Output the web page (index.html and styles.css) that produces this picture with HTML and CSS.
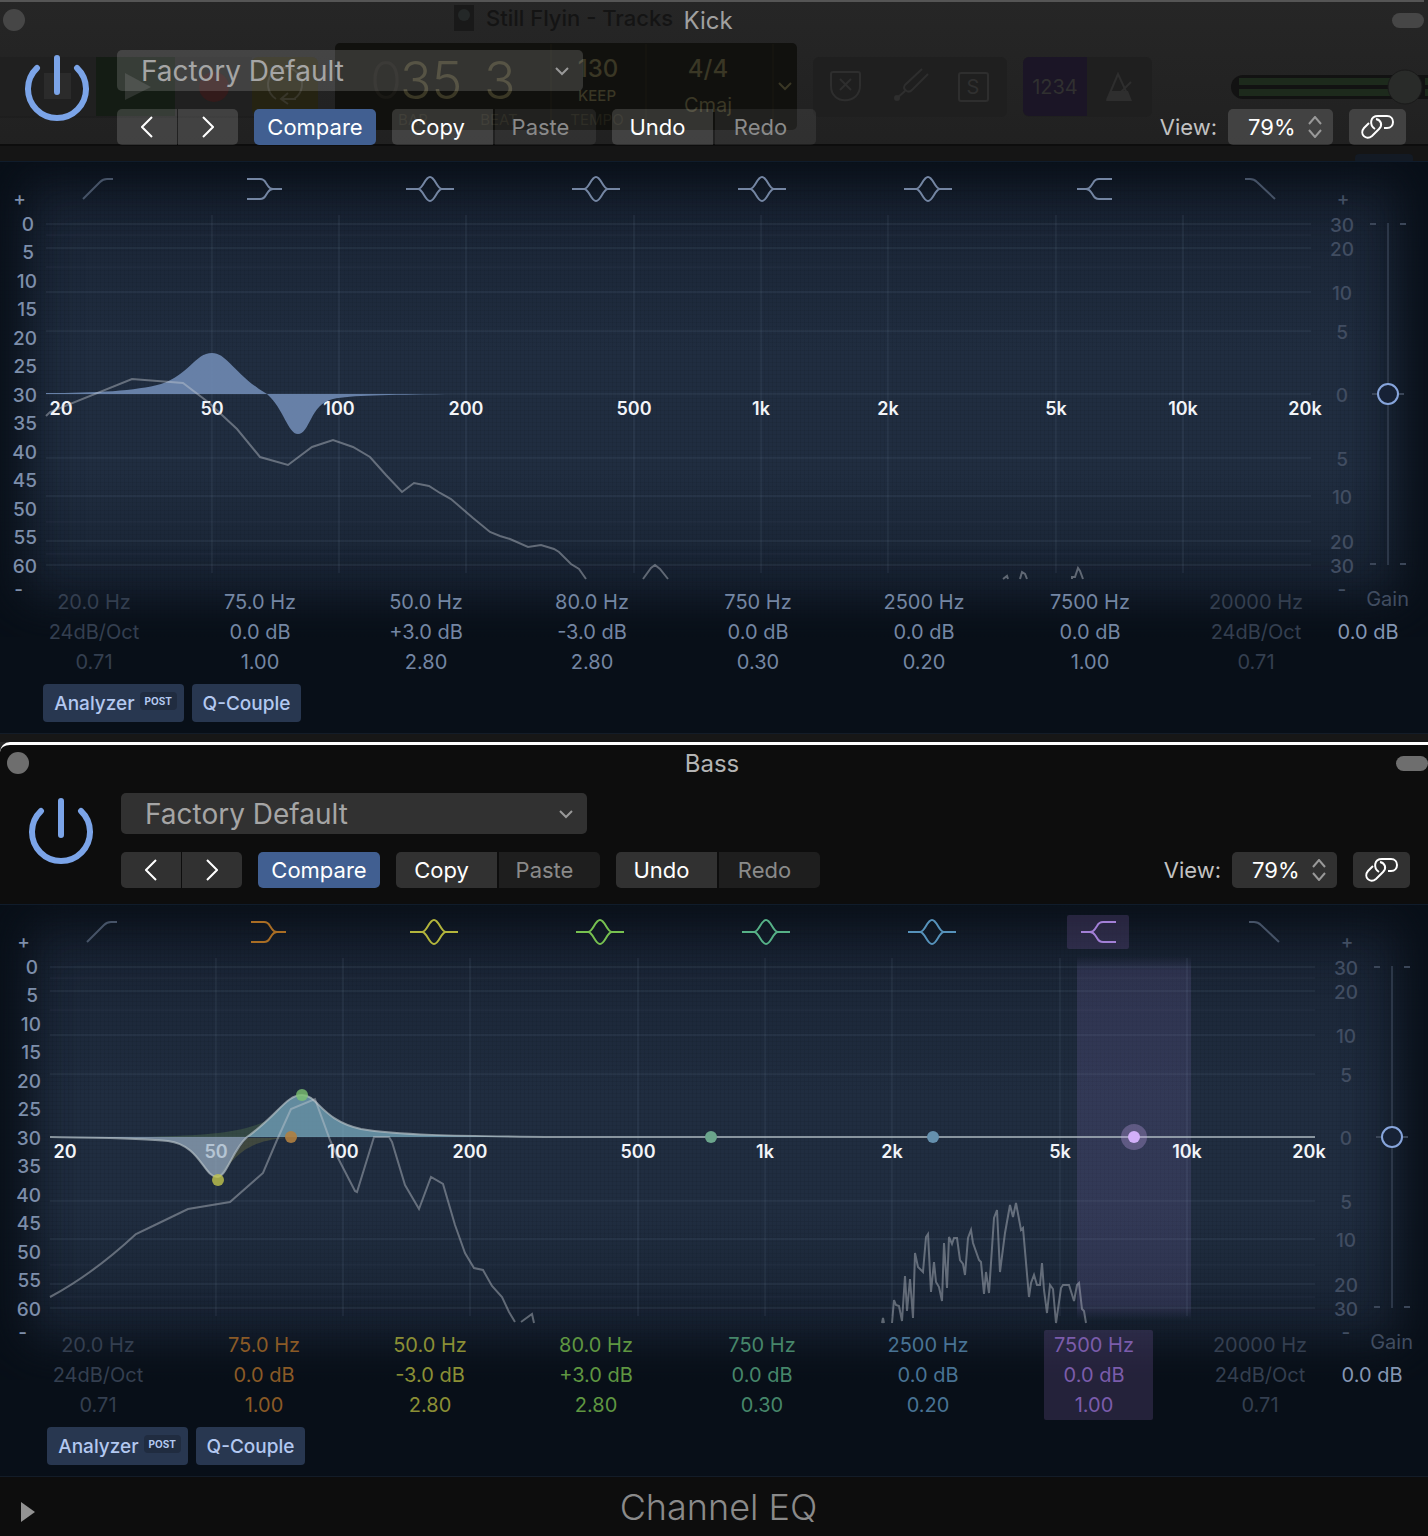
FILE: index.html
```html
<!DOCTYPE html>
<html lang="en">
<head>
    <meta charset="UTF-8">
    <meta name="viewport" content="width=device-width, initial-scale=1.0">
    <title>Channel EQ</title>
    <link rel="stylesheet" href="styles.css">
</head>
<body>
    <!-- Main window toolbar, dimmed behind the first plugin window -->
    <svg class="backdrop" width="1428" height="162" aria-hidden="true">
        <rect x="-6" y="57" width="102" height="59" fill="#202020"/>
        <rect x="44" y="73" width="27" height="26" fill="#2b2b2b"/>
        <rect x="96" y="57" width="79" height="59" fill="#141c14"/>
        <path d="M125 73l26 14-26 13z" fill="#2f342f"/>
        <rect x="175" y="57" width="77" height="59" fill="#202020"/>
        <circle cx="214" cy="87" r="15" fill="#331b1b"/>
        <rect x="252" y="57" width="66" height="59" rx="6" fill="#252312"/>
        <path d="M276 99a17 17 0 1 1 18 0M296 99h-14M288 93l-7 6 7 5" fill="none" stroke="#38362a" stroke-width="2"/>
        <path d="M0 117H334" stroke="#1b1b1b"/>
        <rect x="454" y="5" width="20" height="26" fill="#191919"/>
        <circle cx="464" cy="15" r="6" fill="#242828"/>
        <text x="486" y="26" class="bd-title">Still Flyin - Tracks</text>
        <rect x="335" y="43" width="462" height="87" rx="5" fill="#11110e"/>
        <path d="M551 44v85M646 44v85M773 44v85" stroke="#1a1911"/>
        <text x="370" y="99" class="bd-big bd-off">0</text>
        <text x="400" y="99" class="bd-big">35</text>
        <text x="484" y="99" class="bd-big">3</text>
        <text x="598" y="77" class="bd-mid">130</text>
        <text x="597" y="101" class="bd-small">KEEP</text>
        <text x="708" y="77" class="bd-mid">4/4</text>
        <text x="708" y="112" class="bd-key">Cmaj</text>
        <text x="413" y="125" class="bd-caption">BAR</text>
        <text x="499" y="125" class="bd-caption">BEAT</text>
        <text x="597" y="125" class="bd-caption">TEMPO</text>
        <path d="M779 83l6 6 6-6" fill="none" stroke="#3a3725" stroke-width="2"/>
        <rect x="813" y="57" width="194" height="60" rx="6" fill="#1f1f1f"/>
        <rect x="1023" y="57" width="129" height="60" rx="6" fill="#1f1f1f"/>
        <path d="M1029 57h58v59h-58a6 6 0 0 1-6-6V63a6 6 0 0 1 6-6z" fill="#1b1526"/>
        <g fill="none" stroke="#2e2e2e" stroke-width="2">
            <path d="M833 72h25q2 0 2 2v12c0 18-29 20-29 0V74q0-2 2-2zM840 79l11 11M851 79l-11 11"/>
            <path d="M922 69l-17 16c-3 4 3 9 7 5l16-16M905 91l-9 8"/>
            <rect x="959" y="73" width="29" height="28" rx="2"/>
            <path d="M1107 100l11-26 12 26M1131 82l-12 12"/>
        </g>
        <circle cx="897" cy="98" r="3" fill="#2e2e2e"/>
        <path d="M1106 101l4-10h18l4 10z" fill="#2e2e2e"/>
        <text x="973" y="94" class="bd-solo">S</text>
        <text x="1055" y="94" class="bd-count">1234</text>
        <rect x="1231" y="75" width="220" height="24" rx="12" fill="#121212"/>
        <path d="M1239 78h169v7h-169zM1239 89h169v7h-169zM1425 78h3v7h-3zM1425 89h3v7h-3z" fill="#1d2a1c"/>
        <circle cx="1405" cy="87" r="17" fill="#292b29" stroke="#1a1a1a"/>
        <rect y="144" width="1428" height="2" fill="#0d0d0d"/>
        <rect y="146" width="1428" height="16" fill="#151515"/>
        <rect x="1355" y="154" width="58" height="10" rx="4" fill="#131a24"/>
    </svg>

    <!-- Shared icons -->
    <svg class="icon-defs" aria-hidden="true">
        <symbol id="highpass" viewBox="0 0 48 28"><path d="M9 24L26 7q3-3 7-3h6"/></symbol>
        <symbol id="lowshelf" viewBox="0 0 48 28"><path d="M7 4h13q4 0 6 4l2 3q2 3 5 3h9M7 24h13q4 0 6-4l2-3q2-3 5-3"/></symbol>
        <symbol id="peak" viewBox="0 0 48 28"><path d="M0 14h12M36 14h12M12 14c5 0 7-12 12-12s7 12 12 12c-5 0-7 12-12 12s-7-12-12-12"/></symbol>
        <symbol id="highshelf" viewBox="0 0 48 28"><path d="M42 4H29q-4 0-6 4l-2 3q-2 3-5 3H7M42 24H29q-4 0-6-4l-2-3q-2-3-5-3"/></symbol>
        <symbol id="lowpass" viewBox="0 0 48 28"><path d="M9 4h5q4 0 7 3l18 17"/></symbol>
        <symbol id="power" viewBox="0 0 64 68"><path d="M12 13a29 29 0 1 0 40 0M32 3v34"/></symbol>
        <symbol id="link" viewBox="0 0 34 26"><path d="M14 15C8 11 9 2 17 2h9c8 0 8 12 0 12h-3M8 9l-5 5c-5 6 2 13 8 8l7-7c4-4 2-9-3-10"/></symbol>
    </svg>

    <main id="plugins"></main>

    <script>
        const icons = ['highpass', 'lowshelf', 'peak', 'peak', 'peak', 'peak', 'highshelf', 'lowpass'];

        const plugins = [
            {
                id: 'kick',
                name: 'Kick',
                bands: [
                    ['20.0 Hz', '24dB/Oct', '0.71', 'off'],
                    ['75.0 Hz', '0.0 dB', '1.00', 'low'],
                    ['50.0 Hz', '+3.0 dB', '2.80', 'bell1'],
                    ['80.0 Hz', '-3.0 dB', '2.80', 'bell2'],
                    ['750 Hz', '0.0 dB', '0.30', 'bell3'],
                    ['2500 Hz', '0.0 dB', '0.20', 'bell4'],
                    ['7500 Hz', '0.0 dB', '1.00', 'high'],
                    ['20000 Hz', '24dB/Oct', '0.71', 'off']
                ],
                curves: `
                    <path class="eq-fill" d="M0 186C50 186 90 184 115 177C143 168 149 146 166 146C180 146 187 164 213 182L221 187C238 202 242 227 252 227C264 227 264 197 287 192C305 188 340 188 400 187H0z"/>
                    <path class="spectrum" d="M0 209L4 205 86 172 137 176 162 195 191 222 214 250 242 258 266 240 287 233 307 240 324 250 340 268 356 285 368 276 383 279 394 286 405 292 427 311 444 325 454 329 464 332 482 340 495 338 508 342 513 345 525 357 533 362 540 372M597 372L605 361 609 358 614 362 622 372M957 372L961 369 962 372M974 372L976 365 979 367 981 372M1026 372V370H1029L1032 361 1034 364 1037 372"/>`
            },
            {
                id: 'bass',
                name: 'Bass',
                selected: 6,
                footer: 'Channel EQ',
                bands: [
                    ['20.0 Hz', '24dB/Oct', '0.71', 'off'],
                    ['75.0 Hz', '0.0 dB', '1.00', 'low'],
                    ['50.0 Hz', '-3.0 dB', '2.80', 'bell1'],
                    ['80.0 Hz', '+3.0 dB', '2.80', 'bell2'],
                    ['750 Hz', '0.0 dB', '0.30', 'bell3'],
                    ['2500 Hz', '0.0 dB', '0.20', 'bell4'],
                    ['7500 Hz', '0.0 dB', '1.00', 'high'],
                    ['20000 Hz', '24dB/Oct', '0.71', 'off']
                ],
                curves: `
                    <path fill="#6f9a55" opacity="0.25" d="M100 187C160 185 195 183 222 168L236 155 200 187z"/>
                    <path fill="#a09a40" opacity="0.25" d="M167 228C185 210 190 192 235 188H197z"/>
                    <path fill="#9bb0c4" opacity="0.7" d="M0 187C60 188 95 188 118 191C150 195 154 227 167 227C177 227 181 202 197 187z"/>
                    <path fill="#7fb3c8" opacity="0.7" d="M197 187C228 165 236 145 252 145C268 145 271 170 311 179C345 185 400 186 510 187z"/>
                    <path class="eq-line" d="M0 187C60 188 95 188 118 191C150 195 154 227 167 227C177 227 181 202 197 187C228 165 236 145 252 145C268 145 271 170 311 179C345 185 400 186 510 187H1265"/>
                    <path class="spectrum" d="M0 347Q43 324 86 284L107 274 138 259 180 252 213 223 227 190 241 159 265 149 280 190 288 208 305 241 307 242 324 187 339 187 342 192 355 235 369 259 381 227 393 234 405 275 415 303 424 318 433 320 442 336 452 347 459 362 465 372M471 372L482 364 484 373M832 373L833 368 834 373M842 373L844 350 846 355 849 356 852 371 855 326 857 361 860 329 863 368 865 303 868 317 873 322 876 287 878 284 881 342 884 312 886 332 889 337 892 351 894 293 897 338 899 287 902 294 904 288 907 288 910 310 913 314 915 325 918 288 921 280 923 293 929 310 931 312 934 344 936 322 939 343 944 268 947 260 950 322 955 283 960 255 963 267 966 253 971 280 973 278 979 347 981 333 984 325 987 335 990 335 992 313 994 340 997 363 1000 335 1003 339 1006 373 1011 338 1013 335 1019 335 1024 351 1027 335 1029 333 1032 359 1034 361 1036 373"/>
                    <circle cx="241" cy="187" r="6" fill="#b08040" opacity="0.9"/>
                    <circle cx="168" cy="230" r="6" fill="#c0c44c" opacity="0.8"/>
                    <circle cx="252" cy="145" r="6" fill="#7cc070" opacity="0.8"/>
                    <circle cx="661" cy="187" r="6" fill="#6ba58c"/>
                    <circle cx="883" cy="187" r="6" fill="#6590ae"/>
                    <circle cx="1084" cy="187" r="13" fill="#c9a8f0" opacity="0.3"/>
                    <circle cx="1084" cy="187" r="6" fill="#d2b0fa"/>`
            }
        ];

        // Frequency axis is logarithmic, 422px per decade
        const freqX = (f) => Math.round((Math.log10(f) - 2) * 422 + 293);
        const freqs = [[50, '50'], [100, '100'], [200, '200'], [500, '500'], [1000, '1k'], [2000, '2k'], [5000, '5k'], [10000, '10k']];
        const gainLines = [17, 41, 85, 124, 187, 251, 289, 334, 358];
        const minorLines = [28, 60, 315, 347];
        const gainLabels = [30, 20, 10, 5, 0, 5, 10, 20, 30];

        const plot = (p) => `
            <svg class="plot" viewBox="0 0 1265 374" role="img" aria-label="${p.name} frequency response">
                <defs>
                    <linearGradient id="fade-${p.id}" x1="0" y1="0" x2="0" y2="1">
                        <stop offset="0" stop-color="#7c6ab0" stop-opacity="0"/>
                        <stop offset="0.04" stop-color="#7c6ab0" stop-opacity="0.2"/>
                        <stop offset="0.96" stop-color="#7c6ab0" stop-opacity="0.2"/>
                        <stop offset="1" stop-color="#7c6ab0" stop-opacity="0"/>
                    </linearGradient>
                </defs>
                ${p.selected ? `<rect x="1027" y="6" width="114" height="364" fill="url(#fade-${p.id})"/>` : ''}
                <g class="grid-minor">${minorLines.map((y) => `<path d="M0 ${y}H1265"/>`).join('')}</g>
                <g class="grid-major">
                    ${gainLines.map((y) => `<path d="M0 ${y}H1265"/>`).join('')}
                    ${freqs.map(([f]) => `<path d="M${freqX(f)} 8V366"/>`).join('')}
                </g>
                <g class="freq">
                    <text x="15" y="208">20</text>
                    ${freqs.map(([f, label]) => `<text x="${freqX(f)}" y="208">${label}</text>`).join('')}
                    <text x="1259" y="208">20k</text>
                </g>
                ${p.curves}
            </svg>`;

        const levelScale = () => {
            const rows = [];
            for (let i = 0; i <= 12; i++) {
                const db = i * 5;
                rows.push(`<text x="${i < 2 ? 38 : 41}" y="${24 + Math.floor(i * 57 / 2)}">${db}</text>`);
            }
            return `<svg class="scale level" viewBox="0 0 50 374">
                <text x="30" y="-2">+</text>${rows.join('')}<text x="27" y="389">-</text></svg>`;
        };

        const gainScale = () => `
            <svg class="scale gain" viewBox="0 0 59 374">
                <text x="32" y="-2">+</text>
                ${gainLabels.map((g, i) => `<text x="31" y="${gainLines[i] + 8}">${g}</text>`).join('')}
                <text x="31" y="389">-</text>
            </svg>`;

        document.getElementById('plugins').innerHTML = plugins.map((p) => `
            <section class="plugin ${p.id}">
                <div class="titlebar">
                    <button class="close" aria-label="Close"></button>
                    <h2>${p.name}</h2>
                    <button class="pill" aria-label="Toggle toolbar"></button>
                </div>
                <header class="header">
                    <button class="power" aria-label="Power"><svg><use href="#power"/></svg></button>
                    <div class="controls">
                        <label class="dropdown preset">
                            <select aria-label="Preset"><option>Factory Default</option></select>
                            <svg viewBox="0 0 14 10"><path d="M1 2l6 6 6-6"/></svg>
                        </label>
                        <div class="toolbar">
                            <div class="group">
                                <button class="btn arrow" aria-label="Previous"><svg viewBox="0 0 12 22"><path d="M11 1L1 11l10 10"/></svg></button>
                                <button class="btn arrow" aria-label="Next"><svg viewBox="0 0 12 22"><path d="M1 1l10 10L1 21"/></svg></button>
                            </div>
                            <button class="btn compare">Compare</button>
                            <div class="group edit">
                                <button class="btn">Copy</button>
                                <button class="btn dim">Paste</button>
                            </div>
                            <div class="group edit">
                                <button class="btn">Undo</button>
                                <button class="btn dim">Redo</button>
                            </div>
                            <label class="view-label" for="view-${p.id}">View:</label>
                            <div class="dropdown view">
                                <select id="view-${p.id}"><option>79%</option></select>
                                <svg viewBox="0 0 14 22"><path d="M1 8l6-7 6 7M1 14l6 7 6-7"/></svg>
                            </div>
                            <button class="btn link" aria-label="Link"><svg viewBox="0 0 34 26"><use href="#link"/></svg></button>
                        </div>
                    </div>
                </header>
                <div class="display">
                    <div class="band-icons">
                        ${p.bands.map((b, i) => `<button class="band ${b[3]}${i === p.selected ? ' selected' : ''}" aria-label="Band ${i + 1}"><svg><use href="#${icons[i]}"/></svg></button>`).join('')}
                    </div>
                    <div class="graph">
                        ${levelScale()}
                        ${plot(p)}
                        ${gainScale()}
                        <input class="gain-slider" type="range" min="-30" max="30" value="0" aria-label="Gain">
                    </div>
                    <div class="params">
                        ${p.bands.map((b, i) => `<div class="param ${b[3]}${i === p.selected ? ' selected' : ''}"><span>${b[0]}</span><span>${b[1]}</span><span>${b[2]}</span></div>`).join('')}
                        <div class="gain-readout"><span class="gain-name">Gain</span><span>0.0 dB</span></div>
                    </div>
                    <div class="options">
                        <button class="option analyzer">Analyzer <small>POST</small></button>
                        <button class="option">Q-Couple</button>
                    </div>
                </div>
                ${p.footer ? `<footer class="footer">
                    <button class="disclosure" aria-label="Show more"><svg viewBox="0 0 14 20"><path d="M0 0l14 10L0 20z"/></svg></button>
                    <h1>${p.footer}</h1>
                </footer>` : ''}
            </section>
        `).join('');
    </script>
</body>
</html>
```
FILE: styles.css
```css
* {
    box-sizing: border-box;
}

body {
    margin: 0;
    background: #242424;
    font-family: Inter, "Liberation Sans", sans-serif;
    color: #fff;
    overflow-x: hidden;
}

button,
select {
    font: inherit;
    color: inherit;
    border: none;
    background: none;
    padding: 0;
    margin: 0;
}

svg {
    display: block;
}

h1,
h2 {
    margin: 0;
    font-weight: 400;
}

/* dimmed toolbar behind the windows */
.backdrop {
    position: absolute;
    top: 0;
    left: 0;
    background: linear-gradient(#262626, #202020);
}

.backdrop text {
    text-anchor: middle;
    fill: #3a3725;
}

.backdrop .bd-title {
    text-anchor: start;
    font-size: 22px;
    font-weight: 500;
    fill: #141414;
}

.backdrop .bd-big {
    text-anchor: start;
    font-size: 52px;
    font-weight: 300;
}

.backdrop .bd-off {
    fill: #191814;
}

.backdrop .bd-mid {
    font-size: 24px;
    font-weight: 500;
}

.backdrop .bd-small {
    font-size: 15px;
    font-weight: 500;
}

.backdrop .bd-key {
    font-size: 20px;
}

.backdrop .bd-caption {
    font-size: 15px;
    fill: #201f17;
}

.backdrop .bd-solo,
.backdrop .bd-count {
    font-size: 20px;
    fill: #303030;
}

.icon-defs {
    position: absolute;
    width: 0;
    height: 0;
}

/* plugin windows */
.plugin {
    position: relative;
}

.kick {
    margin: 0 4px 0 -4px;
    border-top: 2px solid #555;
    padding-bottom: 8px;
}

.kick::after {
    content: "";
    position: absolute;
    left: 0;
    right: -4px;
    bottom: 0;
    height: 8px;
    background: #171717;
}

.bass {
    border-top: 3px solid #fff;
    border-radius: 10px 0 0 0;
    background: #0d0d0d;
}

.titlebar {
    display: grid;
    grid-template-columns: 1fr auto 1fr;
    align-items: center;
    height: 36px;
}

.titlebar h2 {
    padding-right: 4px;
    font-size: 24px;
    color: #b4b4b4;
}

.kick .titlebar h2 {
    color: #a0a0a0;
}

.close {
    width: 22px;
    height: 22px;
    margin-left: 7px;
    border-radius: 50%;
    background: #6e6e6e;
}

.pill {
    justify-self: end;
    width: 32px;
    height: 15px;
    border-radius: 8px;
    background: #6e6e6e;
}

.kick .close,
.kick .pill {
    background: #464646;
}

.header {
    display: grid;
    grid-template-columns: 121px 1fr;
    padding: 12px 18px 16px 0;
}

.power {
    width: 64px;
    height: 68px;
    margin: 5px 0 0 29px;
}

.power svg {
    width: 64px;
    height: 68px;
    fill: none;
    stroke: #7ba4e8;
    stroke-width: 6;
    stroke-linecap: round;
}

.dropdown {
    display: grid;
    align-items: center;
    background: rgba(255, 255, 255, 0.15);
    border-radius: 5px;
}

.dropdown select,
.dropdown svg {
    grid-area: 1 / 1;
}

.dropdown select {
    appearance: none;
    width: 100%;
    height: 100%;
    outline: none;
}

.dropdown svg {
    justify-self: end;
    fill: none;
    stroke: #999;
    stroke-width: 2;
    pointer-events: none;
}

.preset {
    width: 466px;
    height: 41px;
    margin-bottom: 18px;
    font-size: 28px;
    color: #a5a5a5;
}

.preset select {
    padding-left: 24px;
}

.preset svg {
    width: 14px;
    height: 10px;
    margin-right: 14px;
}

.toolbar {
    display: flex;
    align-items: center;
    gap: 16px;
    height: 36px;
    font-size: 22px;
}

.group {
    display: flex;
    gap: 1px;
}

.group.edit {
    gap: 2px;
}

.btn {
    width: 101px;
    height: 36px;
    background: rgba(255, 255, 255, 0.15);
    border-radius: 5px;
}

.edit .btn {
    padding-right: 10px;
}

.group .btn:first-child {
    border-radius: 5px 0 0 5px;
}

.group .btn:last-child {
    border-radius: 0 5px 5px 0;
}

.btn svg {
    margin: auto;
    fill: none;
    stroke: #fff;
    stroke-width: 2;
}

.group .arrow {
    width: 60px;
}

.arrow svg {
    width: 12px;
    height: 22px;
}

.btn.compare {
    width: 122px;
    background: #415f91;
}

.btn.dim {
    background: rgba(255, 255, 255, 0.07);
    color: #8a8a8a;
}

.view-label {
    margin-left: auto;
    margin-right: -5px;
    color: #c2c2c2;
}

.view {
    width: 105px;
    height: 36px;
}

.view select {
    padding-left: 20px;
}

.view svg {
    width: 14px;
    height: 22px;
    margin-right: 11px;
}

.btn.link {
    width: 57px;
}

.link svg {
    width: 34px;
    height: 26px;
}

/* EQ display */
.display {
    position: relative;
    padding: 10px 0 11px;
    border-top: 1px solid #101c2b;
    border-bottom: 1px solid #131c28;
    background: #080f18;
}

.kick .display {
    margin-right: -4px;
    padding-right: 4px;
}

.display::before {
    content: "";
    position: absolute;
    inset: 0 0 96px;
    background:
        repeating-linear-gradient(90deg, rgba(0, 0, 0, 0.06) 0 1px, transparent 1px 4px),
        repeating-linear-gradient(rgba(0, 0, 0, 0.06) 0 1px, transparent 1px 4px),
        linear-gradient(#182232, #202d40 40%, #202d40 65%, #182333 90%);
    box-shadow: inset 0 -14px 50px 14px #080f18, inset 0 0 60px 18px #0a1018;
}

.display > * {
    position: relative;
}

.band-icons {
    display: grid;
    grid-template-columns: repeat(8, 1fr);
    justify-items: center;
    height: 35px;
    margin: 0 81px 0 19px;
}

.band {
    width: 62px;
    height: 34px;
    border-radius: 2px;
}

.band svg {
    width: 48px;
    height: 28px;
    margin: auto;
    fill: none;
    stroke: currentColor;
    stroke-width: 2;
}

.band,
.param {
    color: #7486a3;
}

.band.off,
.param.off {
    color: #343f50;
}

.band.off {
    color: #465367;
}

.bass .low {
    color: #8a5a26;
}

.bass .bell1 {
    color: #8b8f35;
}

.bass .bell2 {
    color: #5f9641;
}

.bass .bell3 {
    color: #46866a;
}

.bass .bell4 {
    color: #487394;
}

.bass .high {
    color: #7b5cab;
}

.bass .band.low {
    color: #a96d24;
}

.bass .band.bell1 {
    color: #b3b53c;
}

.bass .band.bell2 {
    color: #77c150;
}

.bass .band.bell3 {
    color: #56b187;
}

.bass .band.bell4 {
    color: #5692bb;
}

.bass .band.high {
    color: #a27fd6;
}

.selected {
    background: rgba(120, 90, 160, 0.26);
}

.graph {
    display: grid;
    grid-template-columns: 50px 1fr 59px 36px 18px;
}

.graph svg {
    width: 100%;
    overflow: visible;
}

.grid-major path,
.grid-minor path {
    stroke: #8ea4c4;
    stroke-width: 2;
    stroke-opacity: 0.08;
}

.grid-minor path {
    stroke-opacity: 0.04;
}

.freq text {
    font-size: 18px;
    font-weight: 600;
    fill: #f2f4f8;
    text-anchor: middle;
}

.scale text {
    font-size: 19px;
    font-weight: 500;
}

.level text {
    fill: #7d8eaa;
    text-anchor: end;
}

.gain text {
    fill: #414d61;
    text-anchor: middle;
}

.eq-fill {
    fill: #6f8ab3;
    opacity: 0.9;
}

.eq-line {
    fill: none;
    stroke: #b4bfc4;
    stroke-width: 2;
    stroke-opacity: 0.7;
}

.spectrum {
    fill: none;
    stroke: #c8ccd4;
    stroke-opacity: 0.42;
    stroke-width: 2;
}

/* track and end marks of the gain fader */
.gain-slider {
    appearance: none;
    writing-mode: vertical-lr;
    align-self: center;
    width: 36px;
    height: 342px;
    margin: 0;
    background:
        linear-gradient(#2c3748, #2c3748) 17px 0 / 2px 100%,
        linear-gradient(#3b4658, #3b4658) 0 0 / 6px 2px,
        linear-gradient(#3b4658, #3b4658) 100% 0 / 6px 2px,
        linear-gradient(#3b4658, #3b4658) 50% 50% / 32px 2px,
        linear-gradient(#3b4658, #3b4658) 0 100% / 6px 2px,
        linear-gradient(#3b4658, #3b4658) 100% 100% / 6px 2px;
    background-repeat: no-repeat;
}

.gain-slider::-webkit-slider-thumb {
    appearance: none;
    width: 22px;
    height: 22px;
    border: 2px solid #87a5dc;
    border-radius: 50%;
    background: #172236;
}

.params {
    display: grid;
    grid-template-columns: repeat(8, 1fr) 81px;
    justify-items: center;
    margin: 6px 0 7px 19px;
    font-size: 20px;
    line-height: 30px;
}

.param {
    display: flex;
    flex-direction: column;
    align-items: center;
    width: 109px;
    padding-right: 8px;
    border-radius: 2px;
}

.gain-readout {
    display: flex;
    flex-direction: column;
    justify-self: stretch;
    align-items: center;
    margin: -3px 15px 0 -16px;
    color: #8496b3;
    gap: 3px;
}

.gain-name {
    align-self: flex-end;
    color: #414d61;
}

.options {
    display: flex;
    gap: 8px;
    padding-left: 47px;
}

.option {
    width: 109px;
    height: 38px;
    border-radius: 4px;
    background: #283750;
    color: #b3c8f0;
    font-size: 19px;
    font-weight: 500;
}

.analyzer {
    display: flex;
    align-items: center;
    justify-content: flex-end;
    gap: 5px;
    width: 141px;
    padding-right: 7px;
}

.analyzer small {
    margin-bottom: 5px;
    padding: 3px 5px;
    border-radius: 4px;
    background: #202c40;
    font-size: 10px;
    line-height: 12px;
    font-weight: 700;
}

.footer {
    display: grid;
    grid-template-columns: 1fr auto 1fr;
    align-items: center;
    height: 59px;
    padding-left: 9px;
}

.footer h1 {
    font-size: 36px;
    font-weight: 300;
    color: #8a8a8a;
}

.disclosure {
    width: 14px;
    height: 20px;
    margin: 10px 0 0 12px;
}

.disclosure svg {
    fill: #929292;
}
```
